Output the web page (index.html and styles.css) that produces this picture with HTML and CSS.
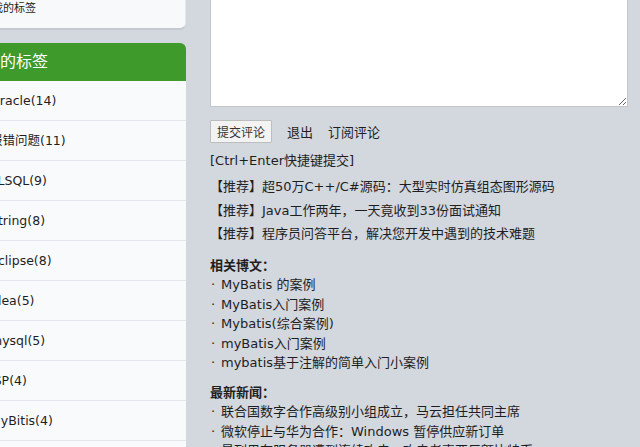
FILE: index.html
```html
<!DOCTYPE html>
<html lang="zh-CN">
<head>
<meta charset="utf-8">
<title>评论</title>
<link rel="stylesheet" href="styles.css">
</head>
<body>
<div class="page">
  <aside class="sidebar">
    <div class="card-top">
      <div class="card-top-line">我的标签</div>
    </div>
    <div class="tags">
      <h3 class="tags-head">我的标签</h3>
      <ul class="tag-list">
        <li>Oracle(14)</li>
        <li>报错问题(11)</li>
        <li>PLSQL(9)</li>
        <li>String(8)</li>
        <li>Eclipse(8)</li>
        <li>idea(5)</li>
        <li>mysql(5)</li>
        <li>JSP(4)</li>
        <li>MyBitis(4)</li>
        <li>更多</li>
      </ul>
    </div>
  </aside>
  <main class="main">
    <textarea class="comment-box"></textarea>
    <div class="actions">
      <button class="btn">提交评论</button>
      <a class="link">退出</a>
      <a class="link">订阅评论</a>
    </div>
    <div class="hint">[Ctrl+Enter快捷键提交]</div>
    <div class="recommends">
      <div>【推荐】超50万C++/C#源码：大型实时仿真组态图形源码</div>
      <div>【推荐】Java工作两年，一天竟收到33份面试通知</div>
      <div>【推荐】程序员问答平台，解决您开发中遇到的技术难题</div>
    </div>
    <div class="block">
      <div class="block-title">相关博文：</div>
      <ul class="dot-list">
        <li>MyBatis 的案例</li>
        <li>MyBatis入门案例</li>
        <li>Mybatis(综合案例)</li>
        <li>myBatis入门案例</li>
        <li>mybatis基于注解的简单入门小案例</li>
      </ul>
    </div>
    <div class="block">
      <div class="block-title">最新新闻：</div>
      <ul class="dot-list">
        <li>联合国数字合作高级别小组成立，马云担任共同主席</li>
        <li>微软停止与华为合作：Windows 暂停供应新订单</li>
        <li>曼列里在服务器遭到连续攻击：攻击者索要巨额比特币</li>
      </ul>
    </div>
  </main>
</div>
</body>
</html>
```

FILE: styles.css
```css
* { box-sizing: border-box; }
html, body {
  margin: 0;
  padding: 0;
  background: #d3d7de;
  overflow: hidden;
}
body {
  font-family: "DejaVu Sans", "Noto Sans CJK SC", sans-serif;
  font-size: 13px;
  color: #1e1e1e;
}
.page {
  display: flex;
  gap: 24px;
  height: 447px;
  overflow: hidden;
}
.sidebar {
  width: 206px;
  margin-left: -20px;
  flex-shrink: 0;
}
.card-top {
  margin-top: -60px;
  height: 89px;
  background: #f8f9fb;
  border-bottom: 1px solid #c4c8ce;
  border-right: 1px solid #e4e7eb;
  border-bottom-right-radius: 6px;
  box-shadow: 0 1px 1px rgba(0,0,0,0.06);
  display: flex;
  align-items: flex-end;
  padding: 0 0 10px 12px;
}
.card-top-line {
  line-height: 18px;
  font-size: 11px;
}
.tags { margin-top: 14px; }
.tags-head {
  margin: 0;
  height: 38px;
  line-height: 38px;
  background: #3e9a2a;
  color: #fff;
  font-weight: normal;
  font-size: 16px;
  padding-left: 4px;
  border-top-right-radius: 6px;
}
.tag-list {
  list-style: none;
  margin: 0;
  padding: 0;
  background: #f9fafc;
}
.tag-list li {
  height: 40px;
  line-height: 40px;
  padding-left: 10px;
  border-bottom: 1px solid #e2e5ea;
  font-size: 12.5px;
}
.main {
  width: 418px;
  flex-shrink: 0;
}
.comment-box {
  display: block;
  width: 418px;
  height: 200px;
  margin: -93px 0 0 0;
  border: 1px solid #c3c6cb;
  background: #fff;
  resize: both;
}
.actions {
  display: flex;
  align-items: center;
  gap: 15px;
  margin-top: 13px;
  height: 23px;
}
.btn {
  height: 23px;
  width: 62px;
  padding: 0;
  font-family: "DejaVu Sans", "Noto Sans CJK SC", sans-serif;
  font-size: 12px;
  color: #333;
  background: #f3f3f3;
  border: 1px solid #bdbdbd;
  border-radius: 1px;
}
.link {
  color: #1e1e1e;
  font-size: 13px;
}
.hint {
  margin-top: 8px;
  line-height: 20px;
}
.recommends {
  margin-top: 4px;
  line-height: 23.5px;
}
.block { margin-top: 10px; }
.block-title {
  font-weight: bold;
  line-height: 19.5px;
}
.dot-list {
  list-style: none;
  margin: 0;
  padding: 0;
}
.dot-list li {
  line-height: 19.5px;
  white-space: nowrap;
}
.dot-list li::before {
  content: "·";
  display: inline-block;
  width: 10px;
  padding-left: 1px;
}
```
